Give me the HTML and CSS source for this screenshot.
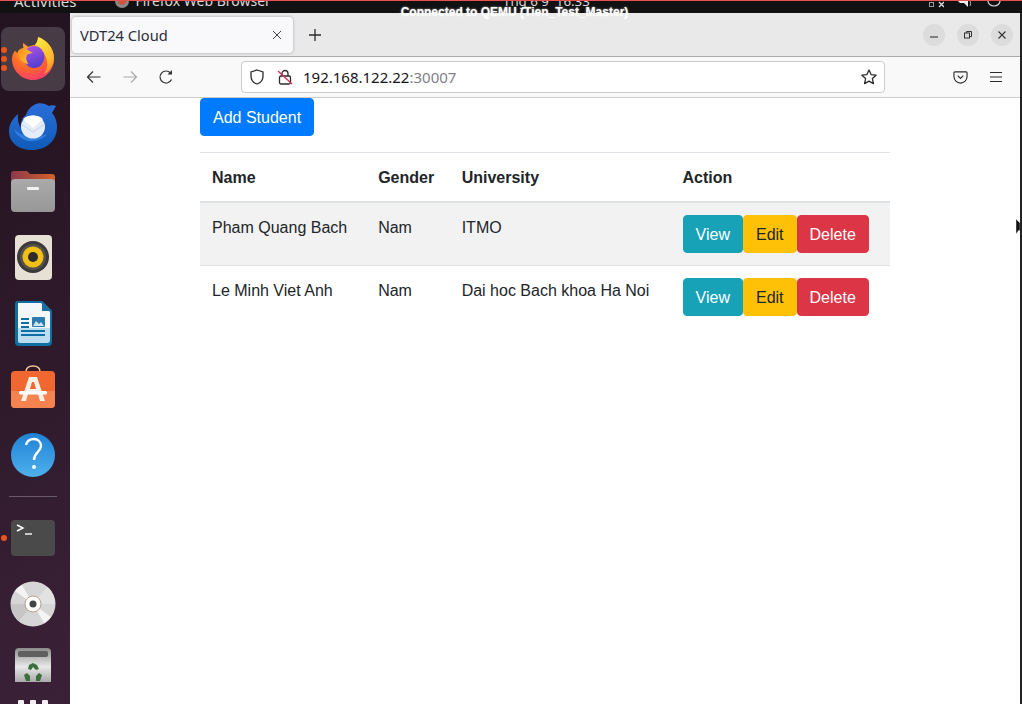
FILE: index.html
```html
<!DOCTYPE html>
<html lang="en">
<head>
<meta charset="utf-8">
<title>VDT24 Cloud</title>
<link rel="stylesheet" href="styles.css">
</head>
<body>
<div class="screen">
  <header class="topbar">
    <div class="topbar-left">
      <span class="activities">Activities</span>
      <span class="appname"><svg class="app-ico" viewBox="0 0 14 14"><circle cx="7" cy="7" r="7" fill="#8a8a8a"/><circle cx="7" cy="7" r="4" fill="#c9573a"/></svg>Firefox Web Browser</span>
    </div>
    <span class="clock">Thg 6 9&nbsp; 16:33</span>
    <div class="tray">
      <svg class="tray-net" viewBox="0 0 16 7"><rect x="1.500" y="1.500" width="4" height="4" fill="none" stroke="#999"/><path d="M11 1l5 5M16 1l-5 5" stroke="#ddd" stroke-width="1.300"/></svg>
      <svg class="tray-snd" viewBox="0 0 15 7"><path d="M0 0h6l4 0v6L6 2H2z" fill="#eee"/><path d="M12 0q1.500 2 0 5" stroke="#aaa" fill="none"/></svg>
      <svg class="tray-pow" viewBox="0 0 14 7"><path d="M1 0a6 5 0 0 0 12 0" fill="none" stroke="#ddd" stroke-width="1.200"/></svg>
    </div>
  </header>
  <div class="qemu">Connected to QEMU (Tien_Test_Master)</div>

  <div class="desktop">
    <nav class="dock">
      <div class="dock-item">
        <svg class="dock-svg" viewBox="0 0 70 66">
          <defs>
            <radialGradient id="ffA" cx="0.4" cy="0.3" r="0.85"><stop offset="0" stop-color="#ffb02e"/><stop offset="0.5" stop-color="#ff6a2a"/><stop offset="1" stop-color="#ff2a84"/></radialGradient>
            <linearGradient id="ffY" x1="0.3" y1="0" x2="0.8" y2="1"><stop offset="0" stop-color="#ffe83f"/><stop offset="0.7" stop-color="#ffb52c"/><stop offset="1" stop-color="#ff7a2a"/></linearGradient>
            <linearGradient id="ffG" x1="0.3" y1="0" x2="0.7" y2="1"><stop offset="0" stop-color="#b052e2"/><stop offset="1" stop-color="#4a3dd0"/></linearGradient>
            <linearGradient id="ffS" x1="0" y1="0" x2="1" y2="0.6"><stop offset="0" stop-color="#ff8a1e"/><stop offset="1" stop-color="#ffc42e"/></linearGradient>
          </defs>
          <rect x="1" y="2" width="64" height="64" rx="8" fill="#473c45"/>
          <circle cx="4" cy="25" r="3" fill="#e9541f"/><circle cx="4" cy="34" r="3" fill="#e9541f"/><circle cx="4" cy="43" r="3" fill="#e9541f"/>
          <path d="M38 12c0 3-1 6-3 8-3 0-5 1-7 2-1-1-3-3-5-4 0 2 0 4 .5 5-3 .5-5 2-6 5-1-.5-2-1.500-2.500-2.500C13 28 12 31 12 34c0 11.500 9.500 21 21 21s21-9.500 21-21c0-9-6-18-16-22z" fill="url(#ffA)"/>
          <path d="M38 12c9 3 16 11 16 21 0 4-1 7-3 10-2 3-4 5-7 6 2-3 4-7 3-12-.5-5-3-10-7-13-2-1-3-2-5-4 2-2.500 3-5 3-8z" fill="url(#ffY)"/>
          <ellipse cx="34" cy="32" rx="10.500" ry="11" fill="url(#ffG)"/>
          <path d="M18 26c2-2 5-3 8-2 3 1 4 3 7 4-3 .5-5 .5-6 2-1.500 3-1 6 1.500 9-4-.5-8-3-10-7-1-2-1-4-.5-6z" fill="url(#ffS)"/>
          <path d="M20 44c4 5 10 6 15 5 5-1 8-4 9-9 1 6-3 11-10 12-6 1-11-3-14-8z" fill="#ff4a5e" opacity=".6"/>
        </svg>
      </div>
      <div class="dock-item">
        <svg class="dock-svg" viewBox="0 0 70 66">
          <defs><linearGradient id="tbB" x1="0" y1="0" x2="0" y2="1"><stop offset="0" stop-color="#2a6ed8"/><stop offset="1" stop-color="#0f5bb8"/></linearGradient></defs>
          <path d="M18 23c-6 5-9 11-9 17 0 12 10 19 23 19 14 0 25-9 25-23 0-6-2-11-5-14l4-7c-2-1-5-1-7 0-4-3-11-4-15-1-4 2-7 6-8 10-4 3-6 8-5 13 0 0-4-5-3-14z" fill="url(#tbB)"/>
          <path d="M14 38c3 8 11 13 20 12 6-1 10-3 13-7-5 2-11 3-17 2-7-1-12-3-16-7z" fill="#3b8bea" opacity=".7"/>
          <ellipse cx="33" cy="36" rx="12" ry="11.500" fill="#e3ecf8"/>
          <path d="M23 28l10 9 10-9c-3-3-6-3.500-10-3.500s-7 .5-10 3.500z" fill="#fff"/>
          <path d="M21 33l12 8 12-8" fill="none" stroke="#c6d5ea" stroke-width="1"/>
        </svg>
      </div>
      <div class="dock-item">
        <svg class="dock-svg" viewBox="0 0 70 66">
          <defs>
            <linearGradient id="fdT" x1="0" y1="0" x2="1" y2="0"><stop offset="0" stop-color="#8a3a4a"/><stop offset="1" stop-color="#d6602a"/></linearGradient>
            <linearGradient id="fdB" x1="0" y1="0" x2="0" y2="1"><stop offset="0" stop-color="#aaa"/><stop offset="1" stop-color="#979797"/></linearGradient>
          </defs>
          <path d="M11 17a3 3 0 0 1 3-3h13l3 3h22a3 3 0 0 1 3 3v8H11z" fill="url(#fdT)"/>
          <rect x="11" y="22" width="44" height="33" rx="4" fill="url(#fdB)"/>
          <rect x="27" y="30" width="12" height="3" rx="1" fill="#f2f2f2"/>
        </svg>
      </div>
      <div class="dock-item">
        <svg class="dock-svg" viewBox="0 0 70 66">
          <rect x="15" y="12" width="37" height="45" rx="4" fill="#e6e1d4"/>
          <circle cx="33" cy="34" r="16" fill="#3a3a3a"/>
          <circle cx="33" cy="34" r="13" fill="#55524c"/>
          <circle cx="33" cy="34" r="10.500" fill="#f2bf17"/>
          <circle cx="33" cy="34" r="5" fill="#2b2b2b"/>
        </svg>
      </div>
      <div class="dock-item">
        <svg class="dock-svg" viewBox="0 0 70 66">
          <path d="M18 12h24l10 10v31a4 4 0 0 1-4 4H19a4 4 0 0 1-4-4V15a3 3 0 0 1 3-3z" fill="#0f6fa3"/>
          <path d="M18 14h23l9 9v16H18z" fill="#f4f7fa"/>
          <path d="M18 39h32v12a3 3 0 0 1-3 3H20a2 2 0 0 1-2-2z" fill="#bcdcef"/>
          <path d="M42 12l10 10H42z" fill="#1e6f9f"/>
          <path d="M21 29h8v2h-8zM21 33h8v2h-8zM21 37h8v2h-8zM21 41h24v2H21zM21 45h24v2H21z" fill="#0f6fa3"/>
          <rect x="32" y="28" width="13" height="10" rx="1" fill="#2a7bb0"/>
          <path d="M33 37l3-5 3 3 2-2 3 4z" fill="#cfe6f3"/>
        </svg>
      </div>
      <div class="dock-item">
        <svg class="dock-svg" viewBox="0 0 70 66">
          <path d="M26 17c0-4 3-6 7-6s7 2 7 6" fill="none" stroke="#f0c68e" stroke-width="1.500"/>
          <rect x="11" y="16" width="44" height="37" rx="4" fill="#f0682f"/>
          <path d="M11 36h44v13a4 4 0 0 1-4 4H15a4 4 0 0 1-4-4z" fill="#f58350"/>
          <path d="M29 22h8l8 24h-5l-2-7H28l-2 7h-5zM30 34h6l-2-7h-2z" fill="#fbefe6"/>
          <rect x="19" y="36" width="28" height="3.500" rx="1.500" fill="#fff"/>
        </svg>
      </div>
      <div class="dock-item">
        <svg class="dock-svg" viewBox="0 0 70 66">
          <defs><linearGradient id="hp" x1="0" y1="0" x2="0" y2="1"><stop offset="0" stop-color="#1f82d6"/><stop offset="1" stop-color="#4eb0ec"/></linearGradient></defs>
          <circle cx="33" cy="34" r="22" fill="url(#hp)"/>
          <path d="M26 24c1-4 4-6 8-6 4 0 7 3 7 7 0 6-7 6-7 14" fill="none" stroke="#fff" stroke-width="2.400"/>
          <circle cx="34" cy="46" r="2" fill="#fff"/>
        </svg>
      </div>
      <div class="dock-sep"></div>
      <div class="dock-item">
        <svg class="dock-svg" viewBox="0 0 70 66">
          <circle cx="4" cy="33" r="3" fill="#e9541f"/>
          <rect x="11" y="15" width="44" height="36" rx="4" fill="#4a4a4a"/>
          <path d="M17 20l6 3-6 3" fill="none" stroke="#fff" stroke-width="1.400"/>
          <path d="M25 29h7" stroke="#fff" stroke-width="1.400"/>
        </svg>
      </div>
      <div class="dock-item">
        <svg class="dock-svg" viewBox="0 0 70 66">
          <circle cx="33" cy="33" r="22.500" fill="#d6d6d6"/>
          <path d="M33 33L15 20a22 22 0 0 1 7-6zM33 33l18 13a22 22 0 0 1-7 6z" fill="#f4f4f4"/>
          <path d="M33 33L55 33a22 22 0 0 0-8-17z" fill="#e2e2e2"/>
          <path d="M33 33L11 33a22 22 0 0 0 8 17z" fill="#c6c6c6"/>
          <circle cx="33" cy="33" r="8" fill="#fff" stroke="#b3a48a"/>
          <circle cx="33" cy="33" r="3.500" fill="#444"/>
        </svg>
      </div>
      <div class="dock-item dock-last">
        <svg class="dock-svg" viewBox="0 0 70 60">
          <defs><linearGradient id="tr" x1="0" y1="0" x2="0" y2="1"><stop offset="0" stop-color="#8b8b8b"/><stop offset=".55" stop-color="#e8e8e8"/><stop offset="1" stop-color="#aaa"/></linearGradient></defs>
          <path d="M15 15a4 4 0 0 1 4-4h28a4 4 0 0 1 4 4v30H15z" fill="url(#tr)"/>
          <rect x="18" y="14" width="30" height="6" rx="2" fill="#5f5f5f"/>
          <path d="M29 28l4-2 4 2 2 4-3 1-3-3-2 3-3-1zM24 38l3-2 3 3v5h-4zM42 38l-3-2-3 3v5h4z" fill="#3d6f3d"/>
        </svg>
      </div>
      <div class="dock-dots"><span class="dock-dot"></span><span class="dock-dot"></span><span class="dock-dot"></span></div>
    </nav>

    <main class="browser">
      <div class="tabbar">
        <div class="tab"><span class="tab-title">VDT24 Cloud</span>
          <svg class="tab-close" viewBox="0 0 10 10"><path d="M1 1l8 8M9 1L1 9" stroke="#444" stroke-width="1"/></svg>
        </div>
        <svg class="newtab" viewBox="0 0 12 12"><path d="M6 0v12M0 6h12" stroke="#2b2b2b" stroke-width="1.300"/></svg>
        <div class="winctl">
          <span class="wbtn"><svg class="wico" viewBox="0 0 10 10"><path d="M1 7h8" stroke="#333" stroke-width="1.100"/></svg></span>
          <span class="wbtn"><svg class="wico" viewBox="0 0 10 10"><rect x="1.500" y="3" width="5" height="5" fill="none" stroke="#333"/><path d="M3.500 3V1.500h5v5H6.500" fill="none" stroke="#333"/></svg></span>
          <span class="wbtn"><svg class="wico" viewBox="0 0 10 10"><path d="M1.500 1.500l7 7M8.500 1.500l-7 7" stroke="#333" stroke-width="1.100"/></svg></span>
        </div>
      </div>
      <div class="toolbar">
        <svg class="nav-ico" viewBox="0 0 16 16"><path d="M14.500 8H1.500M7 2.500L1.500 8 7 13.500" fill="none" stroke="#333" stroke-width="1.200"/></svg>
        <svg class="nav-ico dim" viewBox="0 0 16 16"><path d="M1.500 8h13M9 2.500L14.500 8 9 13.500" fill="none" stroke="#aaa" stroke-width="1.200"/></svg>
        <svg class="nav-ico" viewBox="0 0 16 16"><path d="M13.500 10.500A6 6 0 1 1 12.500 4" fill="none" stroke="#333" stroke-width="1.200"/><path d="M14 1v4.500H9.500z" fill="#333"/></svg>
        <div class="urlbar">
          <svg class="shield" viewBox="0 0 16 16"><path d="M8 1l6 2v4c0 4-3 7-6 8-3-1-6-4-6-8V3z" fill="none" stroke="#2b2b2b" stroke-width="1.300"/></svg>
          <svg class="lock" viewBox="0 0 16 16"><rect x="2.500" y="7" width="11" height="8" rx="1.500" fill="none" stroke="#2b2b2b" stroke-width="1.300"/><path d="M5 7V4.500a3 3 0 0 1 6 0V7" fill="none" stroke="#2b2b2b" stroke-width="1.300"/><path d="M1 2l14 13" stroke="#e22850" stroke-width="1.300"/></svg>
          <span class="url"><span class="url-host">192.168.122.22</span><span class="url-port">:30007</span></span>
          <svg class="star" viewBox="0 0 16 16"><path d="M8 1l2.100 4.600 5 .6-3.700 3.400 1 5L8 12.100 3.600 14.600l1-5L.9 6.200l5-.6z" fill="none" stroke="#2b2b2b" stroke-width="1.300" stroke-linejoin="round"/></svg>
        </div>
        <svg class="pocket" viewBox="0 0 16 16"><path d="M2 2h12a1 1 0 0 1 1 1v4a7 7 0 0 1-14 0V3a1 1 0 0 1 1-1z" fill="none" stroke="#2b2b2b" stroke-width="1.200"/><path d="M5 6l3 3 3-3" fill="none" stroke="#2b2b2b" stroke-width="1.200"/></svg>
        <svg class="menu" viewBox="0 0 14 12"><path d="M1 1.500h12M1 6h12M1 10.500h12" stroke="#2b2b2b" stroke-width="1.200"/></svg>
      </div>
      <section class="content">
        <button class="btn btn-primary" type="button">Add Student</button>
        <table class="table">
          <thead>
            <tr><th>Name</th><th>Gender</th><th>University</th><th>Action</th></tr>
          </thead>
          <tbody>
            <tr class="odd">
              <td>Pham Quang Bach</td><td>Nam</td><td>ITMO</td>
              <td class="actions"><button class="btn btn-info" type="button">View</button><button class="btn btn-warning" type="button">Edit</button><button class="btn btn-danger" type="button">Delete</button></td>
            </tr>
            <tr>
              <td>Le Minh Viet Anh</td><td>Nam</td><td>Dai hoc Bach khoa Ha Noi</td>
              <td class="actions"><button class="btn btn-info" type="button">View</button><button class="btn btn-warning" type="button">Edit</button><button class="btn btn-danger" type="button">Delete</button></td>
            </tr>
          </tbody>
        </table>
      </section>
      <svg class="cursor" viewBox="0 0 4 16"><path d="M0 0l4 4v8l-1-1-3 4z" fill="#111" stroke="#ddd" stroke-width=".5"/></svg>
    </main>
  </div>
</div>
</body>
</html>
```

FILE: styles.css
```css
* { box-sizing: border-box; }
html, body { margin: 0; padding: 0; height: 100%; overflow: hidden; background: #fff; }

.screen { position: relative; width: 1022px; height: 704px; display: flex; flex-direction: column; overflow: hidden; font-family: "Liberation Sans", Arial, sans-serif; }

.topbar { height: 13px; flex: none; background: #111; border-top: 1px solid #e9504f; display: flex; justify-content: space-between; align-items: flex-end; overflow: hidden; position: relative; color: #d8d8d8; font-family: "Noto Sans", "Open Sans", sans-serif; font-size: 14px; line-height: 14px; padding-bottom: 5px; }
.topbar-left { display: flex; padding-left: 14px; gap: 38px; }
.activities, .appname { display: flex; align-items: center; white-space: nowrap; }
.activities { font-size: 15px; }
.appname { gap: 7px; }
.app-ico { width: 14px; height: 14px; }
.clock { position: absolute; left: 503px; bottom: 5px; white-space: nowrap; font-size: 13.3px; }
.tray { display: flex; align-items: flex-start; gap: 14px; padding-right: 21px; height: 7px; align-self: flex-start; }
.tray-net { width: 16px; height: 7px; }
.tray-snd { width: 15px; height: 7px; }
.tray-pow { width: 14px; height: 7px; }

.qemu { position: absolute; left: 0; width: 1029px; top: 5px; text-align: center; color: #fff; font-size: 12px; line-height: 14px; font-weight: 700; white-space: nowrap; text-shadow: 0 0 2px rgba(255,255,255,.8); z-index: 5; }

.desktop { flex: 1; display: flex; min-height: 0; background: #222; }

.dock { width: 70px; flex: none; background: linear-gradient(150deg, #23121f 0%, #2e1a2b 50%, #3b2138 100%); padding-top: 12px; display: flex; flex-direction: column; overflow: hidden; }
.dock-item { height: 66px; flex: none; }
.dock-last { height: 60px; }
.dock-svg { display: block; width: 70px; height: 100%; }
.dock-sep { height: 18px; flex: none; display: flex; align-items: center; padding: 0 13px 0 9px; }
.dock-sep::after { content: ""; display: block; flex: 1; height: 1px; background: #6b5a68; }
.dock-dots { display: flex; gap: 6px; padding-left: 18px; flex: none; margin-top: 3px; }
.dock-dot { width: 6px; height: 6px; background: #f2eef1; border-radius: 1px; }

.browser { flex: 1; min-width: 0; margin-right: 2px; position: relative; background: #fff; display: flex; flex-direction: column; }

.tabbar { height: 44px; flex: none; background: #e9e9e9; border-bottom: 1px solid #aaa; display: flex; align-items: center; padding: 0 7px 0 2px; }
.tab { width: 221px; height: 36px; background: #f9f9fb; border-radius: 4px; box-shadow: 0 0 3px rgba(0,0,0,.3); display: flex; align-items: center; justify-content: space-between; padding: 0 11px 0 8px; }
.tab-title { font-family: "Noto Sans", "Open Sans", sans-serif; font-size: 14.67px; color: #2b2b3a; white-space: nowrap; padding-top: 1px; }
.tab-close { width: 10px; height: 10px; }
.newtab { width: 12px; height: 12px; margin-left: 16px; flex: none; }
.winctl { margin-left: auto; display: flex; gap: 12px; }
.wbtn { width: 22px; height: 22px; border-radius: 50%; background: #dcdcdc; display: flex; align-items: center; justify-content: center; }
.wico { width: 10px; height: 10px; }

.toolbar { height: 41px; flex: none; background: #f9f9fa; border-bottom: 1px solid #ccc; display: flex; align-items: center; padding-left: 16px; padding-right: 16px; }
.nav-ico { width: 16px; height: 16px; margin-right: 20px; flex: none; }
.nav-ico + .nav-ico + .nav-ico { margin-right: 0; }
.urlbar { width: 644px; height: 32px; margin-left: 67px; flex: none; background: #fff; border: 1px solid #ccc; border-radius: 4px; display: flex; align-items: center; padding: 0 7px 0 7px; }
.shield { width: 16px; height: 16px; flex: none; }
.lock { width: 16px; height: 16px; margin-left: 12px; flex: none; }
.url { margin-left: 10px; font-family: "Noto Sans", "Open Sans", sans-serif; font-size: 15px; flex: 1; white-space: nowrap; }
.url-host { color: #15141a; }
.url-port { color: #80808a; }
.star { width: 16px; height: 16px; flex: none; }
.pocket { width: 15px; height: 15px; margin-left: 68px; flex: none; }
.menu { width: 14px; height: 12px; margin-left: 21px; flex: none; }

.content { padding: 0 60px 0 130px; color: #212529; font-size: 16px; line-height: 24px; }

.btn { display: inline-block; font: inherit; font-size: 16px; line-height: 24px; padding: 7px 12px 5px; border: 1px solid transparent; border-radius: 4px; color: #fff; vertical-align: top; }
.btn-primary { background: #007bff; border-color: #007bff; display: block; }
.btn-info { background: #17a2b8; border-color: #17a2b8; }
.btn-warning { background: #ffc107; border-color: #ffc107; color: #212529; }
.btn-danger { background: #dc3545; border-color: #dc3545; }

.table { width: 690px; margin-top: 16px; border-collapse: collapse; }
.table th, .table td { padding: 13px 12px 11px; text-align: left; vertical-align: top; border-top: 1px solid #dee2e6; }
.table .actions { padding: 12px; }
.table thead th { border-bottom: 2px solid #dee2e6; font-weight: 700; }
.odd { background: #f2f2f2; }

.cursor { position: absolute; right: 0; top: 206px; width: 4px; height: 16px; }
```
